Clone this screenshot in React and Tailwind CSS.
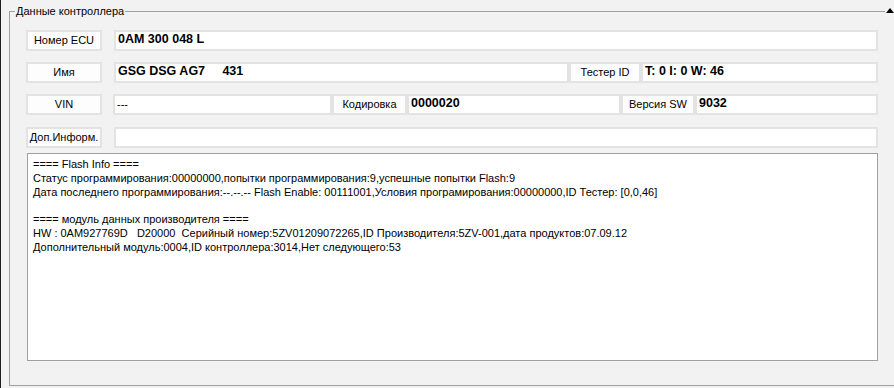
export default function App() {
  const label = "h-[21px] border-2 border-[#e3e3e3] bg-[#fdfdfd] flex items-center justify-center text-[11px] text-black";
  const value = "h-[21px] border-2 border-[#e3e3e3] bg-white flex items-center pl-[2px] pb-[2px] text-[12.5px] font-bold text-black whitespace-pre";
  const thin = "h-[21px] border-2 border-[#e3e3e3] bg-white flex items-center pl-[2px] text-[11px] text-black";

  return (
    <div className="w-[894px] h-[388px] bg-[#f2f2f2] border-l border-[#1e1e1e] pt-[11px] pl-[8px] overflow-hidden relative" style={{ fontFamily: '"Liberation Sans", Arial, sans-serif' }}>
      <div className="relative h-[375px] w-[900px] border-t border-l border-b border-[#a0a0a0] pt-[18px] pl-[16px]">
        <span className="absolute -top-[8px] left-[5px] bg-[#f2f2f2] px-px text-[11px] leading-[14px] text-black">Данные контроллера</span>
        {/* scroll arrow on the top edge */}
        <div className="absolute -top-[4px] left-[875px] w-[10px] h-[7px] bg-[#f2f2f2] flex justify-center">
          <svg width="8" height="5" viewBox="0 0 8 5"><polygon points="4,0 8,5 0,5" fill="#000" /></svg>
        </div>

        <div className="flex">
          <div className={label + " w-[76px]"}>Номер ECU</div>
          <div className={value + " ml-[12px] w-[764px]"}>0AM 300 048 L</div>
        </div>

        <div className="flex mt-[11px]">
          <div className={label + " w-[76px]"}>Имя</div>
          <div className={value + " ml-[12px] w-[455px]"}>GSG DSG AG7     431</div>
          <div className={label + " w-[72px]"}>Тестер ID</div>
          <div className={value + " w-[237px]"}>T: 0 I: 0 W: 46</div>
        </div>

        <div className="flex mt-[11px]">
          <div className={label + " w-[76px]"}>VIN</div>
          <div className={thin + " ml-[11px] w-[219px]"}>---</div>
          <div className={label + " w-[75px]"}>Кодировка</div>
          <div className={value + " w-[214px]"}>0000020</div>
          <div className={label + " w-[74px]"}>Версия SW</div>
          <div className={value + " w-[183px]"}>9032</div>
        </div>

        <div className="flex mt-[12px]">
          <div className={label + " w-[76px]"}>Доп.Информ.</div>
          <div className={value + " ml-[12px] w-[764px]"}></div>
        </div>

        <div className="mt-[5px] ml-[1px] w-[851px] h-[208px] bg-white border border-[#a0a0a0] pl-[5px] pt-[4px] text-[11px] leading-[13.8px] text-black whitespace-pre">
          <div>==== Flash Info ====</div>
          <div>Статус программирования:00000000,попытки программирования:9,успешные попытки Flash:9</div>
          <div>Дата последнего программирования:--.--.-- Flash Enable: 00111001,Условия програмирования:00000000,ID Тестер: [0,0,46]</div>
          <div>&nbsp;</div>
          <div>==== модуль данных производителя ====</div>
          <div>HW : 0AM927769D   D20000  Серийный номер:5ZV01209072265,ID Производителя:5ZV-001,дата продуктов:07.09.12</div>
          <div>Дополнительный модуль:0004,ID контроллера:3014,Нет следующего:53</div>
        </div>
      </div>
    </div>
  );
}
